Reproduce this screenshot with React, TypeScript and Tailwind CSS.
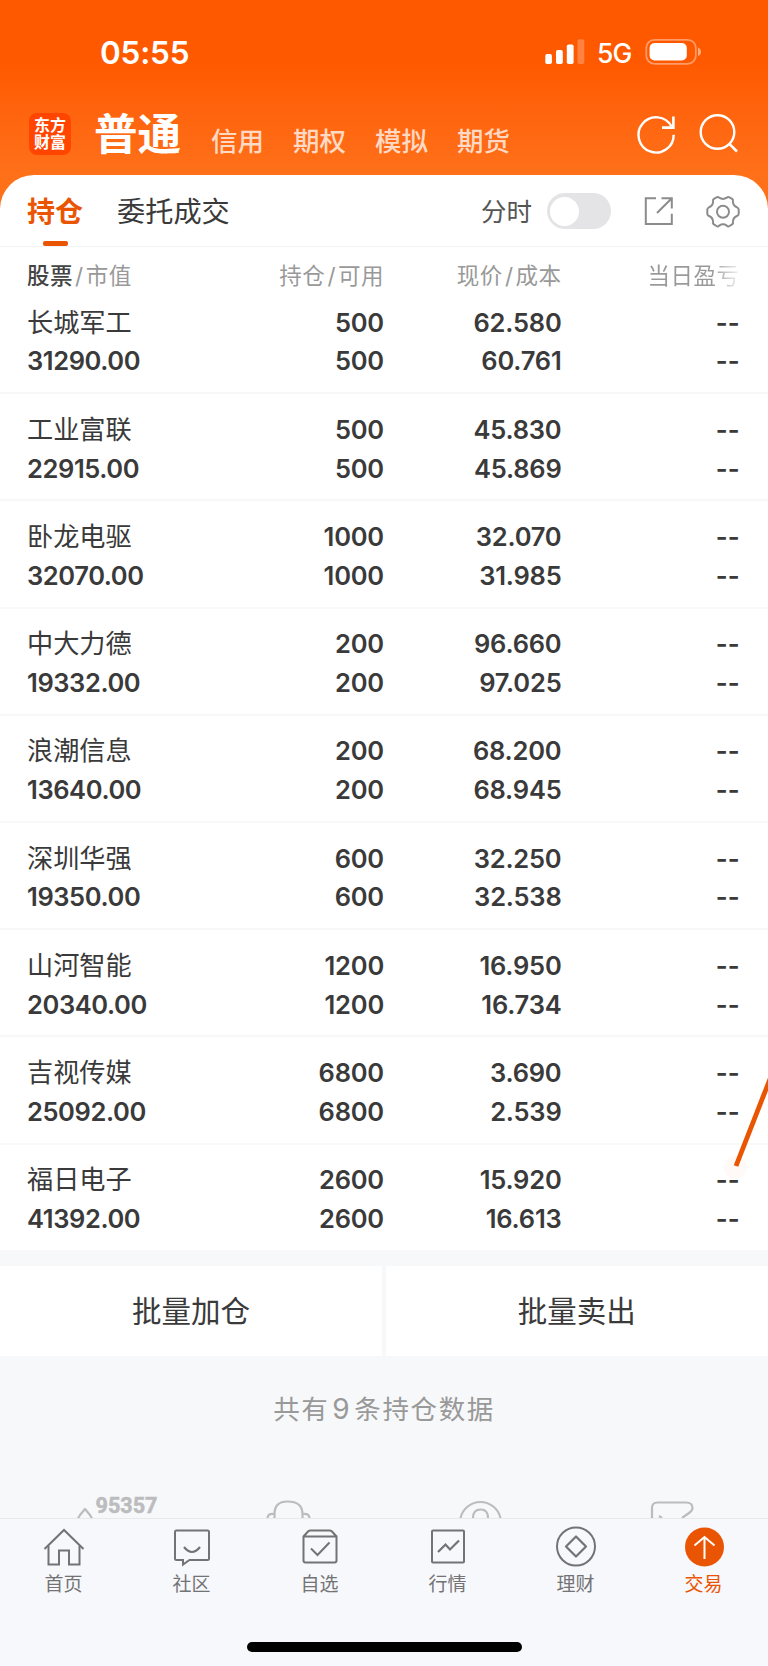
import React from "react";

type Holding = {
  name: string;
  value: string;
  total: string;
  usable: string;
  price: string;
  cost: string;
};

const holdings: Holding[] = [
  { name: "长城军工", value: "31290.00", total: "500", usable: "500", price: "62.580", cost: "60.761" },
  { name: "工业富联", value: "22915.00", total: "500", usable: "500", price: "45.830", cost: "45.869" },
  { name: "卧龙电驱", value: "32070.00", total: "1000", usable: "1000", price: "32.070", cost: "31.985" },
  { name: "中大力德", value: "19332.00", total: "200", usable: "200", price: "96.660", cost: "97.025" },
  { name: "浪潮信息", value: "13640.00", total: "200", usable: "200", price: "68.200", cost: "68.945" },
  { name: "深圳华强", value: "19350.00", total: "600", usable: "600", price: "32.250", cost: "32.538" },
  { name: "山河智能", value: "20340.00", total: "1200", usable: "1200", price: "16.950", cost: "16.734" },
  { name: "吉视传媒", value: "25092.00", total: "6800", usable: "6800", price: "3.690", cost: "2.539" },
  { name: "福日电子", value: "41392.00", total: "2600", usable: "2600", price: "15.920", cost: "16.613" },
];

function StatusBar() {
  return (
    <div className="flex h-[100px] items-start pl-[100px] pt-[33px] text-white">
      <span className="w-[445px] text-[31.5px] font-semibold leading-[40px] tracking-[-0.2px]">05:55</span>
      <svg className="mt-[6px] h-[26px] w-[40px]" viewBox="0 0 40 26" fill="#fff">
        <rect x="0.3" y="15" width="6.6" height="10" rx="1.8" />
        <rect x="11" y="11" width="6.8" height="14" rx="1.8" />
        <rect x="21.8" y="5.5" width="6.8" height="19.5" rx="1.8" />
        <rect x="32.5" y="0.3" width="6.8" height="24.7" rx="1.8" opacity="0.25" />
      </svg>
      <span className="ml-[12px] w-[48px] text-[26.5px] font-medium leading-[40px] tracking-[-0.8px]">5G</span>
      <svg className="mt-[5px] h-[28px] w-[58px]" viewBox="0 0 58 28" fill="none">
        <rect x="1.3" y="1.8" width="49.5" height="24" rx="8" stroke="#fff" strokeOpacity="0.4" strokeWidth="1.8" />
        <rect x="4.6" y="5" width="37.2" height="17.5" rx="5" fill="#fff" />
        <path d="M53 9.5c2 .7 3 2.300 3 4.300s-1 3.600-3 4.300z" fill="#fff" fillOpacity="0.5" />
      </svg>
    </div>
  );
}

function AccountNav() {
  return (
    <div className="flex h-[75px] items-start">
      <div className="ml-[29px] mt-[13px] flex h-[42px] w-[42px] flex-col items-center justify-center rounded-[8px] bg-[#ff4500] text-[16px] font-bold leading-[17px] text-white">
        <span>东方</span>
        <span>财富</span>
      </div>
      <span className="ml-[23px] mt-[9px] w-[117px] text-[43.500px] font-bold leading-[50px] text-white">普通</span>
      <div className="mt-[21px] flex w-[424px] gap-[29px] text-[26.500px] font-medium leading-[40px] text-white/75">
        <span>信用</span>
        <span>期权</span>
        <span>模拟</span>
        <span>期货</span>
      </div>
      <svg className="mt-[12px] h-[46px] w-[110px]" viewBox="0 0 110 46" fill="none" stroke="#fff" strokeWidth="2.400">
        <path d="M37.200 14.200A17.600 17.600 0 1 0 39.400 22.500" transform="translate(-.7 .2)" />
        <path d="M38.400 4.500V15.600H27" strokeWidth="2.600" />
        <circle cx="82.500" cy="20" r="16.800" />
        <path d="M94.300 31.800L102 39.500" strokeWidth="2.600" />
      </svg>
    </div>
  );
}

function GearIcon() {
  return (
    <svg className="h-[34px] w-[34px]" viewBox="0 0 34 34" fill="none" stroke="#8c8c8c" strokeWidth="2">
      <path
        strokeLinejoin="round"
        d="M10.500 2.400Q12 1.400 13.200 2.700Q17 5.200 20.800 2.700Q22 1.400 23.500 2.400L26.100 3.900Q27.500 4.800 26.900 6.600Q27.100 10.800 31 12.300Q32.600 13 32.700 14.600V18.800Q32.600 20.400 31 21Q27.100 22.600 26.900 26.700Q27.500 28.600 26.100 29.400L23.500 31Q22 32 20.800 30.600Q17 28.100 13.200 30.600Q12 32 10.500 31L7.900 29.400Q6.500 28.600 7.100 26.700Q6.900 22.600 3 21Q1.400 20.400 1.300 18.800V14.600Q1.400 13 3 12.300Q6.900 10.800 7.100 6.600Q6.500 4.800 7.900 3.900Z"
      />
      <circle cx="17" cy="16.700" r="6" />
    </svg>
  );
}

function PanelTabs() {
  return (
    <div className="flex h-[72px] items-start border-b border-[#f3f3f5] pl-[27px] text-[#3a3a3a]">
      <div className="flex w-[90px] flex-col items-start">
        <span className="mt-[17px] text-[28px] font-bold leading-[40px] text-[#ea5504]">持仓</span>
        <span className="ml-[16px] mt-[9px] h-[5px] w-[25px] rounded-[2px] bg-[#ea5504]" />
      </div>
      <span className="mt-[17px] w-[364px] text-[28.200px] leading-[40px]">委托成交</span>
      <span className="mt-[17px] w-[66px] text-[25.500px] leading-[40px] text-[#555]">分时</span>
      <span className="mt-[18px] flex h-[36px] w-[64px] items-center rounded-full bg-[#e4e4e7] pl-[3px]">
        <span className="h-[29px] w-[29px] rounded-full bg-white" />
      </span>
      <svg className="ml-[33px] mt-[21px] h-[30px] w-[30px]" viewBox="0 0 30 30" fill="none" stroke="#8c8c8c" strokeWidth="2">
        <path d="M12 2.300H1.800V28H27.800V17.800" />
        <path d="M17.500 2.300H27.800V12.500M27.800 2.300L13 17" />
      </svg>
      <span className="ml-[32px] mt-[20px]">
        <GearIcon />
      </span>
    </div>
  );
}

const columns = "grid grid-cols-[187px_170px_177.500px_178px] pl-[27px]";

function TableHead() {
  return (
    <div className={`${columns} h-[40px] pt-[9px] text-[22.500px] leading-[40px] text-[#999]`}>
      <span className="tracking-[0.500px]">
        <span className="font-medium text-[#444]">股票</span>
        <span className="mx-[2px]">/</span>市值
      </span>
      <span className="text-right tracking-[0.500px]">持仓<span className="mx-[2px]">/</span>可用</span>
      <span className="text-right tracking-[0.500px]">现价<span className="mx-[2px]">/</span>成本</span>
      <span className="bg-gradient-to-r from-[#999] from-84% to-[#999]/10 bg-clip-text text-right tracking-[0.500px] text-transparent">当日盈亏</span>
    </div>
  );
}

function HoldingRow({ item }: { item: Holding }) {
  return (
    <div className={`${columns} h-[107.200px] content-start border-b-2 border-[#f8f8fa] pt-[16.600px] text-[25.500px] font-semibold leading-[38.800px] tracking-[-0.200px] text-[#3a3a3a]`}>
      <span className="text-[26.200px] font-normal tracking-normal">{item.name}</span>
      <span className="text-right">{item.total}</span>
      <span className="text-right">{item.price}</span>
      <span className="text-right tracking-normal">--</span>
      <span className="tracking-[-0.400px]">{item.value}</span>
      <span className="text-right">{item.usable}</span>
      <span className="text-right">{item.cost}</span>
      <span className="text-right tracking-normal">--</span>
    </div>
  );
}

function ServiceStrip() {
  return (
    <svg className="mt-auto h-[28px] w-[768px] shrink-0" viewBox="0 0 768 28" fill="none" stroke="#bcbcbe" strokeWidth="2.200">
      <path d="M78 28.500L80 25L85 19L90 25L92 28.500" strokeLinejoin="round" />
      <text x="95.500" y="22.500" fill="#bcbcbe" stroke="#bcbcbe" strokeWidth="0.500" fontSize="21.500" fontWeight="700" fontFamily="Roboto" textLength="62" lengthAdjust="spacingAndGlyphs">95357</text>
      <path d="M274.500 28V24Q274.500 11.500 287.500 11.500Q302.500 11.500 302.500 24V28M274 24Q268 23 267.500 28M303 24Q309 23 309.500 28" />
      <path d="M460.500 28A20.500 20.500 0 0 1 500.500 28M473 28Q473 19.500 480.700 19.500Q488 19.500 488 28" />
      <path d="M652 28V18Q652 12.500 657.500 12.500H686Q692.500 12.500 692.500 18Q692.500 20.500 689 23L682 28M659 26L662 28" />
    </svg>
  );
}

const navItems = [
  {
    label: "首页",
    icon: (
      <g>
        <path d="M1.500 23L21 4L40.500 23" />
        <path d="M5.500 20V38.500H16V24.500H26V38.500H36.500V20" />
      </g>
    ),
  },
  {
    label: "社区",
    icon: (
      <g>
        <path d="M5.500 4.500H36.500Q38 4.500 38 6V32.500Q38 34 36.500 34H18.500L12 38.500V34H5.500Q4 34 4 32.500V6Q4 4.500 5.500 4.500Z" />
        <path d="M13 21Q21 31 29 21" strokeWidth="2.200" />
      </g>
    ),
  },
  {
    label: "自选",
    icon: (
      <g>
        <path d="M4.500 10.500H37.500V34.500Q37.500 36.500 35.500 36.500H6.500Q4.500 36.500 4.500 34.500V10.500L9 5.500Q10 4.500 11.500 4.500H30.500Q32 4.500 33 5.500L37.500 10.500" />
        <path d="M12 22.500L18.500 29L30.500 16.500" />
      </g>
    ),
  },
  {
    label: "行情",
    icon: (
      <g>
        <rect x="5" y="4.500" width="32" height="32" rx="1" />
        <path d="M11 26L18.500 18.500L23 23.500L32 14.500" strokeWidth="2.200" />
      </g>
    ),
  },
  {
    label: "理财",
    icon: (
      <g>
        <circle cx="21" cy="20.500" r="19" />
        <path d="M21 10.500L31 20.500L21 30.500L11 20.500Z" strokeWidth="2.200" strokeLinejoin="round" />
      </g>
    ),
  },
  {
    label: "交易",
    active: true,
    icon: (
      <g>
        <circle cx="21.500" cy="21" r="19.500" fill="#ea5504" stroke="none" />
        <path d="M21.500 33V11M11.500 19.500L21.500 11L31.500 19.500" stroke="#fff" />
      </g>
    ),
  },
];

function BottomNav() {
  return (
    <nav className="flex h-[148px] shrink-0 flex-col items-center border-t border-[#e9e9ec] bg-[#f7f8fb]">
      <div className="grid w-full grid-cols-6">
        {navItems.map((item) => (
          <div key={item.label} className={`flex flex-col items-center pr-[1px] ${item.active ? "text-[#ea5504]" : "text-[#737375]"}`}>
            <svg className="mt-[7px] h-[42px] w-[42px]" viewBox="0 0 42 42" fill="none" stroke="currentColor" strokeWidth="2">
              {item.icon}
            </svg>
            <span className="mt-[2px] text-[19px] leading-[30px]">{item.label}</span>
          </div>
        ))}
      </div>
      <div className="mt-[42px] h-[10px] w-[275px] rounded-full bg-black" />
    </nav>
  );
}

export default function App() {
  return (
    <div className="relative flex h-[1666px] w-[768px] flex-col overflow-hidden bg-[#f7f8fa] font-['Inter','Noto_Sans_CJK_SC',sans-serif]">
      <div className="bg-linear-to-b from-[#ff5900] from-25% to-[#ff7019] to-70%">
        <StatusBar />
        <AccountNav />
        <div className="h-[72px] rounded-t-[34px] bg-white">
          <PanelTabs />
        </div>
      </div>
      <main className="bg-white">
        <TableHead />
        {holdings.map((item) => (
          <HoldingRow key={item.name} item={item} />
        ))}
      </main>
      <div className="mt-[14px] grid h-[90px] grid-cols-2 gap-[3.500px] text-center text-[29.500px] leading-[90px] text-[#3a3a3a]">
        <span className="bg-white">批量加仓</span>
        <span className="bg-white">批量卖出</span>
      </div>
      <div className="mt-[33px] text-center text-[26.500px] leading-[40px] tracking-[1.600px] text-[#999]">
        共有<span className="mx-[3px] text-[28px]">9</span>条持仓数据
      </div>
      <ServiceStrip />
      <BottomNav />
      <svg className="absolute right-0 top-[1070px] h-[112px] w-[50px]" viewBox="0 0 50 112" fill="none">
        <circle cx="17.500" cy="97.500" r="11.500" fill="#ff5533" fillOpacity="0.035" />
        <path d="M18 96L52 9" stroke="#ea5504" strokeWidth="4.800" />
      </svg>
    </div>
  );
}
